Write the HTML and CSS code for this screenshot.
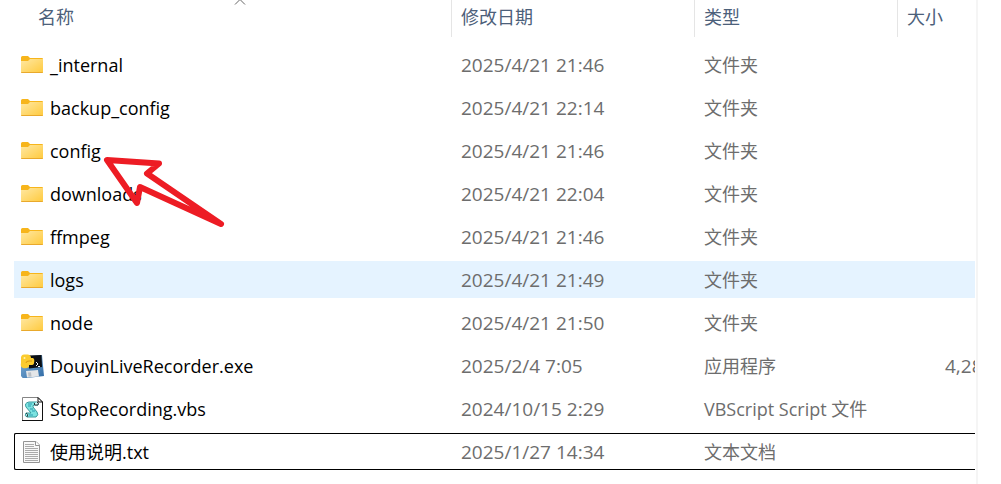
FILE: index.html
```html
<!DOCTYPE html>
<html lang="zh-CN">
<head>
    <meta charset="UTF-8">
    <meta name="viewport" content="width=device-width, initial-scale=1.0">
    <title>DouyinLiveRecorder</title>
    <link rel="stylesheet" href="styles.css">
</head>
<body>
    <!-- Shared icon shapes -->
    <svg class="sprite" aria-hidden="true">
        <defs>
            <linearGradient id="folderFill" x1="0" y1="0" x2="1" y2="1">
                <stop offset="0" stop-color="#ffe8a3"/>
                <stop offset="1" stop-color="#ffca3d"/>
            </linearGradient>
            <linearGradient id="diskFill" x1="0" y1="0" x2="1" y2="1">
                <stop offset="0" stop-color="#7fb0d8"/>
                <stop offset="1" stop-color="#2f6aa5"/>
            </linearGradient>
        </defs>
        <symbol id="folder" viewBox="0 0 24 24">
            <path d="M1 4.5Q1 3 2.5 3H8L10 5H22Q23 5 23 6V9H1Z" fill="#f7b51b"/>
            <path d="M1 8H8L10 6H23V19Q23 20 22 20H2Q1 20 1 19Z" fill="url(#folderFill)"/>
            <path d="M1 19H23Q23 20 22 20H2Q1 20 1 19Z" fill="#e9a92c"/>
        </symbol>
    </svg>

    <main class="explorer">
        <table class="file-list">
            <thead>
                <tr>
                    <th class="sorted">
                        <button type="button">名称</button>
                        <svg class="sort-mark" viewBox="0 0 12 6" aria-hidden="true"><path d="M1 5.5L6 .5L11 5.5"/></svg>
                    </th>
                    <th><button type="button">修改日期</button></th>
                    <th><button type="button">类型</button></th>
                    <th><button type="button">大小</button></th>
                </tr>
            </thead>
            <tbody>
                <tr>
                    <td class="name"><svg class="icon"><use href="#folder"/></svg>_internal</td>
                    <td>2025/4/21 21:46</td>
                    <td class="type">文件夹</td>
                    <td></td>
                </tr>
                <tr>
                    <td class="name"><svg class="icon"><use href="#folder"/></svg>backup_config</td>
                    <td>2025/4/21 22:14</td>
                    <td class="type">文件夹</td>
                    <td></td>
                </tr>
                <tr>
                    <td class="name"><svg class="icon"><use href="#folder"/></svg>config</td>
                    <td>2025/4/21 21:46</td>
                    <td class="type">文件夹</td>
                    <td></td>
                </tr>
                <tr>
                    <td class="name"><svg class="icon"><use href="#folder"/></svg>downloads</td>
                    <td>2025/4/21 22:04</td>
                    <td class="type">文件夹</td>
                    <td></td>
                </tr>
                <tr>
                    <td class="name"><svg class="icon"><use href="#folder"/></svg>ffmpeg</td>
                    <td>2025/4/21 21:46</td>
                    <td class="type">文件夹</td>
                    <td></td>
                </tr>
                <tr class="hovered">
                    <td class="name"><svg class="icon"><use href="#folder"/></svg>logs</td>
                    <td>2025/4/21 21:49</td>
                    <td class="type">文件夹</td>
                    <td></td>
                </tr>
                <tr>
                    <td class="name"><svg class="icon"><use href="#folder"/></svg>node</td>
                    <td>2025/4/21 21:50</td>
                    <td class="type">文件夹</td>
                    <td></td>
                </tr>
                <tr>
                    <td class="name">
                        <svg class="icon" viewBox="0 0 24 24">
                            <path d="M1 3L22 1L24 22L3 24.5L1 22Z" fill="url(#diskFill)"/>
                            <path d="M8 1.5L21.500 1L22 13L9 14.500Z" fill="#0b0f14"/>
                            <path d="M6 17L18 16L19 22.5L7 23.5Z" fill="#e4e6e8"/>
                            <path d="M8 18.5L11 18.2L11.5 22.5L8.5 22.8Z" fill="#b9bfc6"/>
                            <path d="M1 4Q1 0 5 .5H8Q11 1 11 4H13Q15 5 14 9Q14 11 11 11H9V13Q6 15 3 14Q0 13 1 9Z" fill="#fbcb2e"/>
                            <path d="M6 9Q6 7 9 7H12" fill="none" stroke="#d99a12"/>
                            <circle cx="4.5" cy="4" r="1" fill="#fff3b0"/>
                            <path d="M16 8L18 10L16 12M18 12.5H20" fill="none" stroke="#fff"/>
                        </svg>DouyinLiveRecorder.exe
                    </td>
                    <td>2025/2/4 7:05</td>
                    <td class="type">应用程序</td>
                    <td class="size">4,28</td>
                </tr>
                <tr>
                    <td class="name">
                        <svg class="icon" viewBox="0 0 24 24">
                            <path d="M2.5 .5H18L22.5 5V23.5H2.5Z" fill="#fff" stroke="#858585"/>
                            <path d="M2 23.5H22.5V5H18V.5L22.5 5" fill="none" stroke="#111"/>
                            <path d="M9 5H17Q19 6 18 8H15Q12 8 13 10L17 15Q19 18 16 20H7Q4 19 6 16H11L6 10Q4 6 9 5Z" fill="#7ce3e0" stroke="#3b9a9d"/>
                            <path d="M15 6Q13 7 15 8H18Q19 6 17 5M6 16Q9 17 7 20" fill="#d6f7f5" stroke="#26363a"/>
                            <path d="M8 7H12M8 9H11M10 12H13M12 14H15M9 18H13" stroke="#2a9bb0"/>
                        </svg>StopRecording.vbs
                    </td>
                    <td>2024/10/15 2:29</td>
                    <td class="type">VBScript Script 文件</td>
                    <td></td>
                </tr>
                <tr class="focused">
                    <td class="name">
                        <svg class="icon" viewBox="0 0 24 24">
                            <path d="M3.5 1.5H16L19.5 5V22.5H3.5Z" fill="#f8f8f8" stroke="#949494"/>
                            <path d="M15.5 1.5V5.5H19.5" fill="#fff" stroke="#949494"/>
                            <path d="M5 4.5H14M5 6.5H14M5 8.5H18M5 10.5H18M5 12.5H18M5 14.5H18M5 16.5H18M5 18.5H18M5 20.5H18" stroke="#aaa"/>
                        </svg>使用说明.txt
                    </td>
                    <td>2025/1/27 14:34</td>
                    <td class="type">文本文档</td>
                    <td></td>
                </tr>
            </tbody>
        </table>

        <!-- Arrow pointing at the config folder -->
        <svg class="arrow" viewBox="0 0 122 72" aria-hidden="true">
            <path d="M4 4L56 7.5L44 17.5L118 68L37 31L34 47Z"/>
        </svg>
    </main>
</body>
</html>
```
FILE: styles.css
```css
:root {
    --text-color: #000;
    --muted-color: #6d6d6d;
    --header-color: #4c607a;
    --line-color: #e5e5e5;
    --hover-bg: #e5f3ff;
}

* {
    margin: 0;
    padding: 0;
    box-sizing: border-box;
}

body {
    background: #fff;
    color: var(--text-color);
    font-family: "Open Sans", "Noto Sans CJK SC", sans-serif;
    font-size: 18px;
    line-height: 24px;
}

.sprite {
    position: absolute;
    width: 0;
    height: 0;
}

.explorer {
    position: relative;
    min-height: 100vh;
    margin-right: 23px;
    padding: 0 1px 0 14px;
    border-right: 2px solid #f5f5f5;
    overflow: hidden;
}

.file-list,
.file-list thead {
    display: block;
}

.file-list tbody {
    display: flex;
    flex-direction: column;
    gap: 6px;
    padding-top: 9px;
}

.file-list tr {
    display: grid;
    grid-template-columns: 437px 243px 203px 1fr;
    height: 37px;
}

.file-list th {
    border-left: 1px solid var(--line-color);
    text-align: left;
}

.file-list th.sorted {
    position: relative;
    border-left: none;
}

.file-list th button {
    padding: 5px 9px;
    border: none;
    background: none;
    color: var(--header-color);
    font: inherit;
    font-weight: 400;
}

.file-list th.sorted button {
    padding-left: 24px;
}

.sort-mark {
    position: absolute;
    top: -1px;
    left: 220px;
    width: 12px;
    height: 6px;
    fill: none;
    stroke: #666;
}

.file-list td {
    display: flex;
    align-items: center;
    min-width: 0;
    padding-left: 10px;
    color: var(--muted-color);
    font-size: 19px;
    white-space: nowrap;
    overflow: hidden;
}

.file-list td.name {
    gap: 6px;
    padding-left: 6px;
    color: var(--text-color);
    font-size: 18px;
}

.file-list td.type {
    font-size: 18px;
}

.file-list td.size {
    padding-left: 48px;
}

.icon {
    flex: none;
    width: 24px;
    height: 24px;
}

.hovered {
    background: var(--hover-bg);
}

.focused {
    box-shadow: inset 0 1px #000, inset 0 -1px #000, inset 1px 0 #000;
    border-radius: 2px 0 0 2px;
}

.arrow {
    position: absolute;
    top: 156px;
    left: 103px;
    width: 122px;
    height: 72px;
    fill: none;
    stroke: #ed1c24;
    stroke-width: 6;
    stroke-linejoin: round;
}
```
